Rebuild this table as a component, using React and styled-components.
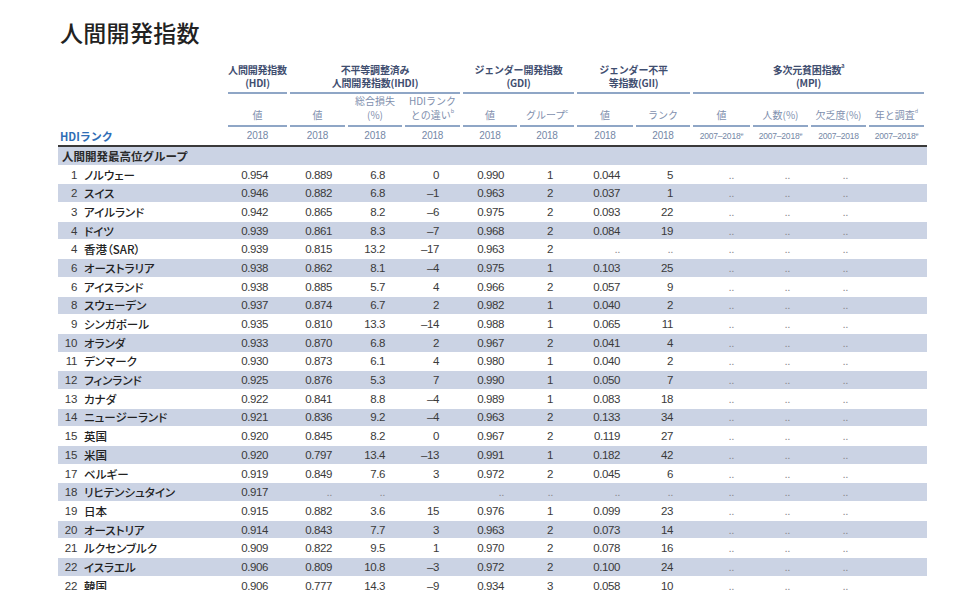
import React from "react";
import styled, { createGlobalStyle } from "styled-components";

const GlobalStyle = createGlobalStyle`
  html, body {
    margin: 0;
    padding: 0;
    background: #ffffff;
  }
  body {
    font-family: "Noto Sans CJK JP", "Liberation Sans", sans-serif;
    color: #333333;
  }
`;

const COLUMNS = "170px 62px 58px 57px 58px 57px 57px 59px 57px 60px 58px 58px 58px";
const PADS = [22, 16, 20, 24, 16, 24, 16, 20, 19, 21, 21, 21];

const NUM_FONT = `"Liberation Sans Narrow", "Liberation Sans", sans-serif`;

const Page = styled.div`
  padding: 17px 0 0 58px;
  width: 919px;
`;

const Title = styled.h1`
  margin: 0 0 16px 2px;
  font-size: 23px;
  line-height: 30px;
  font-weight: 500;
  color: #222222;
  letter-spacing: 0.3px;
`;

const Table = styled.div`
  width: 869px;
`;

const Row = styled.div`
  display: grid;
  grid-template-columns: ${COLUMNS};
`;

const GroupHeadRow = styled(Row)`
  align-items: end;
`;

const GroupHead = styled.div`
  grid-column: span ${(p) => p.$span};
  margin-right: 3px;
  padding-bottom: 3px;
  border-bottom: 2px solid #8fa6c6;
  text-align: center;
  font-size: 10px;
  line-height: 13px;
  font-weight: 700;
  color: #3f4e70;
  white-space: nowrap;
  letter-spacing: -0.2px;
`;

const SubHeadRow = styled(Row)`
  align-items: end;
  height: 32px;
`;

const SubHead = styled.div`
  margin-right: 3px;
  padding-bottom: 4px;
  border-bottom: 2px solid #8fa6c6;
  text-align: center;
  font-size: 10px;
  line-height: 13.5px;
  color: #7f90ae;
  white-space: nowrap;
`;

const Blank = styled.div``;

const YearRow = styled(Row)`
  height: 21px;
  align-items: center;
  border-bottom: 2px solid #3a3a3a;
  box-sizing: border-box;
`;

const RankLabel = styled.div`
  padding-left: 2px;
  font-size: 11px;
  font-weight: 700;
  color: #2f6db5;
`;

const Year = styled.div`
  margin-right: 3px;
  text-align: center;
  font-family: ${NUM_FONT};
  font-size: ${(p) => (p.$small ? "8.5px" : "10px")};
  letter-spacing: -0.2px;
  color: #7487a6;
  white-space: nowrap;
`;

const Sup = styled.sup`
  font-size: 5.5px;
  vertical-align: top;
  line-height: 1;
  position: relative;
  top: 1px;
`;

const SectionRow = styled.div`
  height: 18.7px;
  box-sizing: border-box;
  border-bottom: 1px solid #ffffff;
  background: #cbd3e4;
  padding-left: 4px;
  font-size: 11.5px;
  line-height: 18px;
  font-weight: 700;
  color: #2a2a2a;
`;

const DataRow = styled(Row)`
  height: 18.7px;
  box-sizing: border-box;
  border-bottom: 1px solid #ffffff;
  align-items: center;
  background: ${(p) => (p.$shaded ? "#cbd3e4" : "#ffffff")};
`;

const Country = styled.div`
  display: flex;
  align-items: center;
  gap: 7px;
  white-space: nowrap;
`;

const Rank = styled.span`
  width: 19px;
  text-align: right;
  font-family: ${NUM_FONT};
  font-size: 11.5px;
  letter-spacing: -0.3px;
  color: #3a3a3a;
`;

const Name = styled.span`
  font-size: 11.5px;
  font-weight: 500;
  font-feature-settings: "palt";
  color: #222222;
`;

const Num = styled.div`
  text-align: right;
  padding-right: ${(p) => p.$pad}px;
  font-family: ${NUM_FONT};
  font-size: 11.5px;
  letter-spacing: -0.4px;
  color: ${(p) => (p.$dots ? "#8c8c8c" : "#3a3a3a")};
  white-space: nowrap;
`;

const M = ["..", "..", "..", ""];

const rows = [
  ["1", "ノルウェー", "0.954", "0.889", "6.8", "0", "0.990", "1", "0.044", "5"],
  ["2", "スイス", "0.946", "0.882", "6.8", "–1", "0.963", "2", "0.037", "1"],
  ["3", "アイルランド", "0.942", "0.865", "8.2", "–6", "0.975", "2", "0.093", "22"],
  ["4", "ドイツ", "0.939", "0.861", "8.3", "–7", "0.968", "2", "0.084", "19"],
  ["4", "香港（SAR）", "0.939", "0.815", "13.2", "–17", "0.963", "2", "..", ".."],
  ["6", "オーストラリア", "0.938", "0.862", "8.1", "–4", "0.975", "1", "0.103", "25"],
  ["6", "アイスランド", "0.938", "0.885", "5.7", "4", "0.966", "2", "0.057", "9"],
  ["8", "スウェーデン", "0.937", "0.874", "6.7", "2", "0.982", "1", "0.040", "2"],
  ["9", "シンガポール", "0.935", "0.810", "13.3", "–14", "0.988", "1", "0.065", "11"],
  ["10", "オランダ", "0.933", "0.870", "6.8", "2", "0.967", "2", "0.041", "4"],
  ["11", "デンマーク", "0.930", "0.873", "6.1", "4", "0.980", "1", "0.040", "2"],
  ["12", "フィンランド", "0.925", "0.876", "5.3", "7", "0.990", "1", "0.050", "7"],
  ["13", "カナダ", "0.922", "0.841", "8.8", "–4", "0.989", "1", "0.083", "18"],
  ["14", "ニュージーランド", "0.921", "0.836", "9.2", "–4", "0.963", "2", "0.133", "34"],
  ["15", "英国", "0.920", "0.845", "8.2", "0", "0.967", "2", "0.119", "27"],
  ["15", "米国", "0.920", "0.797", "13.4", "–13", "0.991", "1", "0.182", "42"],
  ["17", "ベルギー", "0.919", "0.849", "7.6", "3", "0.972", "2", "0.045", "6"],
  ["18", "リヒテンシュタイン", "0.917", "..", "..", "", "..", "..", "..", ".."],
  ["19", "日本", "0.915", "0.882", "3.6", "15", "0.976", "1", "0.099", "23"],
  ["20", "オーストリア", "0.914", "0.843", "7.7", "3", "0.963", "2", "0.073", "14"],
  ["21", "ルクセンブルク", "0.909", "0.822", "9.5", "1", "0.970", "2", "0.078", "16"],
  ["22", "イスラエル", "0.906", "0.809", "10.8", "–3", "0.972", "2", "0.100", "24"],
  ["22", "韓国", "0.906", "0.777", "14.3", "–9", "0.934", "3", "0.058", "10"],
];

export default function App() {
  return (
    <>
      <GlobalStyle />
      <Page>
        <Title>人間開発指数</Title>
        <Table>
          <GroupHeadRow>
            <Blank />
            <GroupHead $span={1}>
              人間開発指数
              <br />
              (HDI)
            </GroupHead>
            <GroupHead $span={3}>
              不平等調整済み
              <br />
              人間開発指数(IHDI)
            </GroupHead>
            <GroupHead $span={2}>
              ジェンダー開発指数
              <br />
              (GDI)
            </GroupHead>
            <GroupHead $span={2}>
              ジェンダー不平
              <br />
              等指数(GII)
            </GroupHead>
            <GroupHead $span={4}>
              多次元貧困指数<Sup>a</Sup>
              <br />
              (MPI)
            </GroupHead>
          </GroupHeadRow>

          <SubHeadRow>
            <Blank />
            <SubHead>値</SubHead>
            <SubHead>値</SubHead>
            <SubHead>
              総合損失
              <br />
              (%)
            </SubHead>
            <SubHead>
              HDIランク
              <br />
              との違い<Sup>b</Sup>
            </SubHead>
            <SubHead>値</SubHead>
            <SubHead>
              グループ<Sup>c</Sup>
            </SubHead>
            <SubHead>値</SubHead>
            <SubHead>ランク</SubHead>
            <SubHead>値</SubHead>
            <SubHead>人数(%)</SubHead>
            <SubHead>欠乏度(%)</SubHead>
            <SubHead>
              年と調査<Sup>d</Sup>
            </SubHead>
          </SubHeadRow>

          <YearRow>
            <RankLabel>HDIランク</RankLabel>
            {Array.from({ length: 8 }).map((_, i) => (
              <Year key={i}>2018</Year>
            ))}
            <Year $small>
              2007–2018<Sup>e</Sup>
            </Year>
            <Year $small>
              2007–2018<Sup>e</Sup>
            </Year>
            <Year $small>2007–2018</Year>
            <Year $small>
              2007–2018<Sup>e</Sup>
            </Year>
          </YearRow>

          <SectionRow>人間開発最高位グループ</SectionRow>

          {rows.map((r, i) => {
            const values = [...r.slice(2), ...M];
            return (
              <DataRow key={i} $shaded={i % 2 === 1}>
                <Country>
                  <Rank>{r[0]}</Rank>
                  <Name>{r[1]}</Name>
                </Country>
                {values.map((v, j) => (
                  <Num key={j} $pad={PADS[j]} $dots={v === ".."}>
                    {v}
                  </Num>
                ))}
              </DataRow>
            );
          })}
        </Table>
      </Page>
    </>
  );
}
